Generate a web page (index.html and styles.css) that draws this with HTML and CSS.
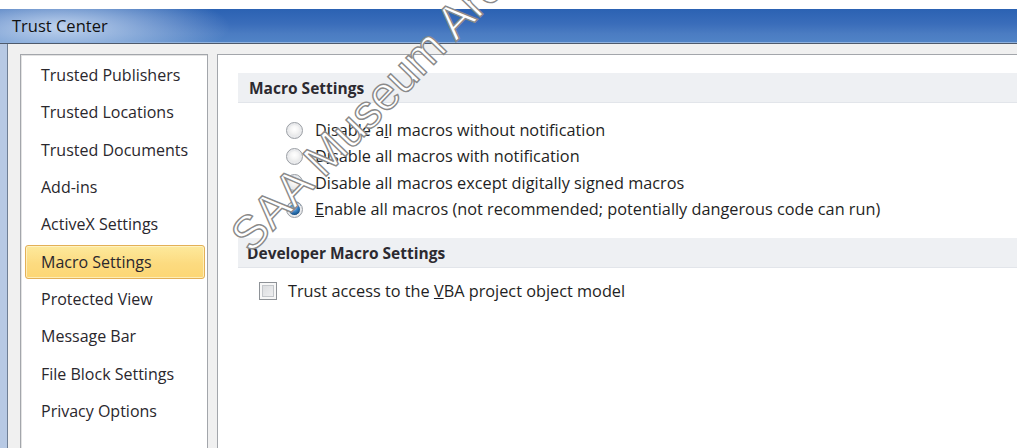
FILE: index.html
```html
<!DOCTYPE html>
<html lang="en">
<head>
<meta charset="utf-8">
<title>Trust Center</title>
<link rel="stylesheet" href="styles.css">
</head>
<body>
<div class="window">
  <div class="titlebar"><span class="title">Trust Center</span></div>
  <div class="client">
    <nav class="nav">
      <div class="nav-item">Trusted Publishers</div>
      <div class="nav-item">Trusted Locations</div>
      <div class="nav-item">Trusted Documents</div>
      <div class="nav-item">Add-ins</div>
      <div class="nav-item">ActiveX Settings</div>
      <div class="nav-item selected">Macro Settings</div>
      <div class="nav-item">Protected View</div>
      <div class="nav-item">Message Bar</div>
      <div class="nav-item">File Block Settings</div>
      <div class="nav-item">Privacy Options</div>
    </nav>
    <main class="pane">
      <div class="section-head">Macro Settings</div>
      <div class="options">
        <label class="option"><span class="radio"></span><span>Disable a<u>l</u>l macros without notification</span></label>
        <label class="option"><span class="radio"></span><span>D<u>i</u>sable all macros with notification</span></label>
        <label class="option"><span class="radio"></span><span>Disable all macros except di<u>g</u>itally signed macros</span></label>
        <label class="option"><span class="radio checked"></span><span><u>E</u>nable all macros (not recommended; potentially dangerous code can run)</span></label>
      </div>
      <div class="section-head dev">Developer Macro Settings</div>
      <label class="check-row"><span class="checkbox"></span><span>Trust access to the <u>V</u>BA project object model</span></label>
    </main>
  </div>
</div>
<div class="watermark">SAA Museum Archive</div>
</body>
</html>
```
FILE: styles.css
```css
html, body {
  margin: 0;
  padding: 0;
  background: #ffffff;
  overflow: hidden;
}

body {
  width: 1017px;
  height: 448px;
  position: relative;
  font-family: "Open Sans", "Noto Sans", "DejaVu Sans", sans-serif;
  color: #1f1f24;
}

.window {
  margin-top: 9px;
  height: 439px;
  display: flex;
  flex-direction: column;
  background: #b7c9e4;
  padding-left: 7px;
}

.titlebar {
  height: 33px;
  margin-left: -7px;
  padding-left: 12px;
  display: flex;
  align-items: center;
  background:
    radial-gradient(ellipse 170px 40px at 60px 18px, rgba(214, 228, 246, 0.85), rgba(214, 228, 246, 0) 100%),
    linear-gradient(#2b62b3 0%, #3a6dba 45%, #4b7cc2 75%, #5083c6 100%);
  border-bottom: 1px solid #8fb1de;
  box-shadow: 0 1px 0 #4e5a6c;
}

.title {
  font-size: 16.5px;
  color: #111;
}

.client {
  flex: 1;
  display: flex;
  gap: 9px;
  background: #f0f0f0;
  border-left: 1px solid #6f7f95;
  margin-top: 1px;
  padding: 10px 0 0 12px;
}

.nav {
  width: 188px;
  box-sizing: border-box;
  flex: none;
  background: #fff;
  border: 1px solid #a3a6ab;
  border-bottom: none;
  box-shadow: inset 1px 1px 0 #e3e3e3;
  padding: 3px 2px 0 4px;
  display: flex;
  flex-direction: column;
  gap: 3.33px;
}

.nav-item {
  height: 34px;
  box-sizing: border-box;
  display: flex;
  align-items: center;
  padding-left: 15px;
  font-size: 16px;
  color: #2a272d;
  border: 1px solid transparent;
  border-radius: 3px;
  white-space: nowrap;
}

.nav-item.selected {
  background: linear-gradient(#fde99c, #fcdb80 55%, #fcd674);
  border-color: #e3b057;
  box-shadow: inset 0 0 0 1px rgba(255, 246, 210, 0.7);
}

.pane {
  flex: 1;
  background: #fff;
  border: 1px solid #a3a6ab;
  border-right: none;
  border-bottom: none;
  padding: 18px 0 0 20px;
}

.section-head {
  height: 29px;
  display: flex;
  align-items: center;
  padding-left: 11px;
  background: #eef0f3;
  border-bottom: 1px solid #e2e5ea;
  font-size: 15.5px;
  font-weight: 700;
  color: #2c2a30;
}

.section-head.dev {
  padding-left: 9px;
}

.options {
  display: flex;
  flex-direction: column;
  padding: 14px 0 16px 48px;
}

.option {
  height: 26.33px;
  display: flex;
  align-items: center;
  gap: 12px;
  font-size: 16.3px;
  white-space: nowrap;
}

.radio {
  width: 15px;
  height: 15px;
  border-radius: 50%;
  border: 1px solid #9a9ea4;
  background: radial-gradient(circle at 50% 40%, #ffffff 0%, #f4f4f4 35%, #d4d6d9 100%);
  box-shadow: inset 0 0 0 2px #e9eaec;
  flex: none;
}

.radio.checked {
  background:
    radial-gradient(circle at 45% 38%, #9fd0f4 0%, #3b87c8 30%, #134c82 60%, rgba(19, 76, 130, 0) 62%),
    radial-gradient(circle at 50% 40%, #ffffff 0%, #eef0f2 50%, #d4d6d9 100%);
}

.check-row {
  display: flex;
  align-items: center;
  gap: 11px;
  height: 20px;
  margin-top: 13px;
  padding-left: 21px;
  font-size: 16.3px;
  white-space: nowrap;
}

.checkbox {
  width: 16px;
  height: 16px;
  border: 1px solid #8e9297;
  background: linear-gradient(135deg, #d6d8db, #f4f4f5);
  box-shadow: inset 0 0 0 2px #f7f7f7, inset 0 0 0 3px #c4c7cb;
  flex: none;
}

.watermark {
  position: absolute;
  left: 256px;
  top: 212px;
  transform-origin: 0 100%;
  transform: rotate(-46deg);
  font-family: "Liberation Sans", Arial, sans-serif;
  font-size: 47px;
  line-height: 1;
  white-space: nowrap;
  color: #ffffff;
  -webkit-text-stroke: 1.4px #8a8a8a;
  pointer-events: none;
}
```
